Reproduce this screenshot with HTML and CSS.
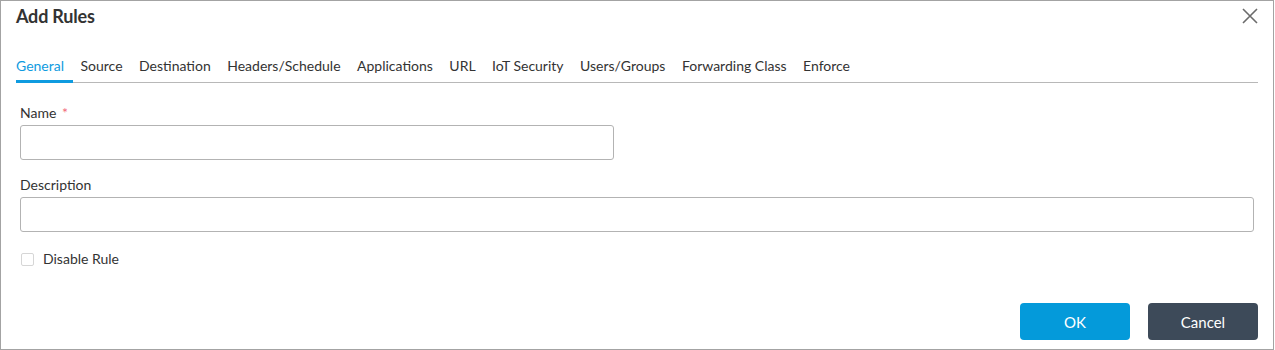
FILE: index.html
```html
<!DOCTYPE html>
<html>
<head>
<meta charset="utf-8">
<link rel="stylesheet" href="styles.css">
</head>
<body>
<div class="dialog">
  <div class="header">
    <h1 class="title">Add Rules</h1>
    <button class="close" aria-label="Close">
      <svg width="16" height="16" viewBox="0 0 16 16"><path d="M1 1 L15 15 M15 1 L1 15" stroke="#6b6b6b" stroke-width="1.6" fill="none"/></svg>
    </button>
  </div>
  <div class="tabs">
    <div class="tab active">General</div>
    <div class="tab">Source</div>
    <div class="tab">Destination</div>
    <div class="tab">Headers/Schedule</div>
    <div class="tab">Applications</div>
    <div class="tab">URL</div>
    <div class="tab">IoT Security</div>
    <div class="tab">Users/Groups</div>
    <div class="tab">Forwarding Class</div>
    <div class="tab">Enforce</div>
  </div>
  <div class="body">
    <div class="field">
      <label class="label">Name <span class="req">*</span></label>
      <input class="input input-name" type="text">
    </div>
    <div class="field">
      <label class="label">Description</label>
      <input class="input" type="text">
    </div>
    <div class="check-row">
      <span class="checkbox"></span>
      <span class="check-label">Disable Rule</span>
    </div>
  </div>
  <div class="footer">
    <button class="btn btn-ok">OK</button>
    <button class="btn btn-cancel">Cancel</button>
  </div>
</div>
</body>
</html>
```

FILE: styles.css
```css
* { box-sizing: border-box; }
html, body { margin: 0; padding: 0; background: #fff; }
body { font-family: Lato, "Open Sans", Arial, sans-serif; color: #333; }

.dialog {
  width: 1274px;
  height: 350px;
  border: 1px solid #a3a3a3;
  display: flex;
  flex-direction: column;
  background: #fff;
}

.header {
  display: flex;
  justify-content: space-between;
  align-items: flex-start;
  padding: 3px 15px 0 15px;
}
.title {
  margin: 0;
  font-size: 18px;
  font-weight: 700;
  line-height: 24px;
  color: #333;
  letter-spacing: -0.2px;
}
.close {
  border: 0;
  background: none;
  padding: 0;
  margin-top: 4px;
  width: 16px;
  height: 16px;
  display: block;
}
.close svg { display: block; }

.tabs {
  display: flex;
  margin: 28px 15px 0 15px;
  border-bottom: 1px solid #b8b8b8;
}
.tab {
  font-size: 14px;
  line-height: 20px;
  padding: 0 9px 4px 0;
  margin-right: 7.5px;
  border-bottom: 3px solid transparent;
  margin-bottom: -1px;
  color: #333;
  white-space: nowrap;
}
.tab.active {
  color: #0f9be0;
  border-bottom-color: #0f9be0;
}

.body {
  padding: 20px 19px 0 19px;
  display: flex;
  flex-direction: column;
}
.field {
  display: flex;
  flex-direction: column;
  margin-bottom: 15px;
}
.label {
  font-size: 14px;
  line-height: 20px;
  color: #333;
}
.req {
  color: #f26b7a;
  margin-left: 2px;
}
.input {
  margin-top: 2px;
  height: 35px;
  border: 1px solid #b3b3b3;
  border-radius: 3px;
  font: inherit;
  padding: 0 8px;
  outline: none;
}
.input-name { width: 594px; }

.check-row {
  display: flex;
  align-items: center;
  margin-top: 2px;
  height: 20px;
}
.checkbox {
  width: 13px;
  height: 13px;
  border: 1px solid #d6d6d6;
  border-radius: 2px;
  margin-left: 1px;
}
.check-label {
  font-size: 14px;
  line-height: 20px;
  margin-left: 9px;
  color: #333;
}

.footer {
  margin-top: auto;
  display: flex;
  justify-content: flex-end;
  gap: 18px;
  padding: 0 15px 9px 0;
}
.btn {
  width: 110px;
  height: 37px;
  border: 0;
  border-radius: 4px;
  color: #fff;
  font-family: Lato, "Open Sans", Arial, sans-serif;
  font-size: 15px;
  padding: 0;
}
.btn-ok { background: #049ada; }
.btn-cancel { background: #3d4a59; }
```
